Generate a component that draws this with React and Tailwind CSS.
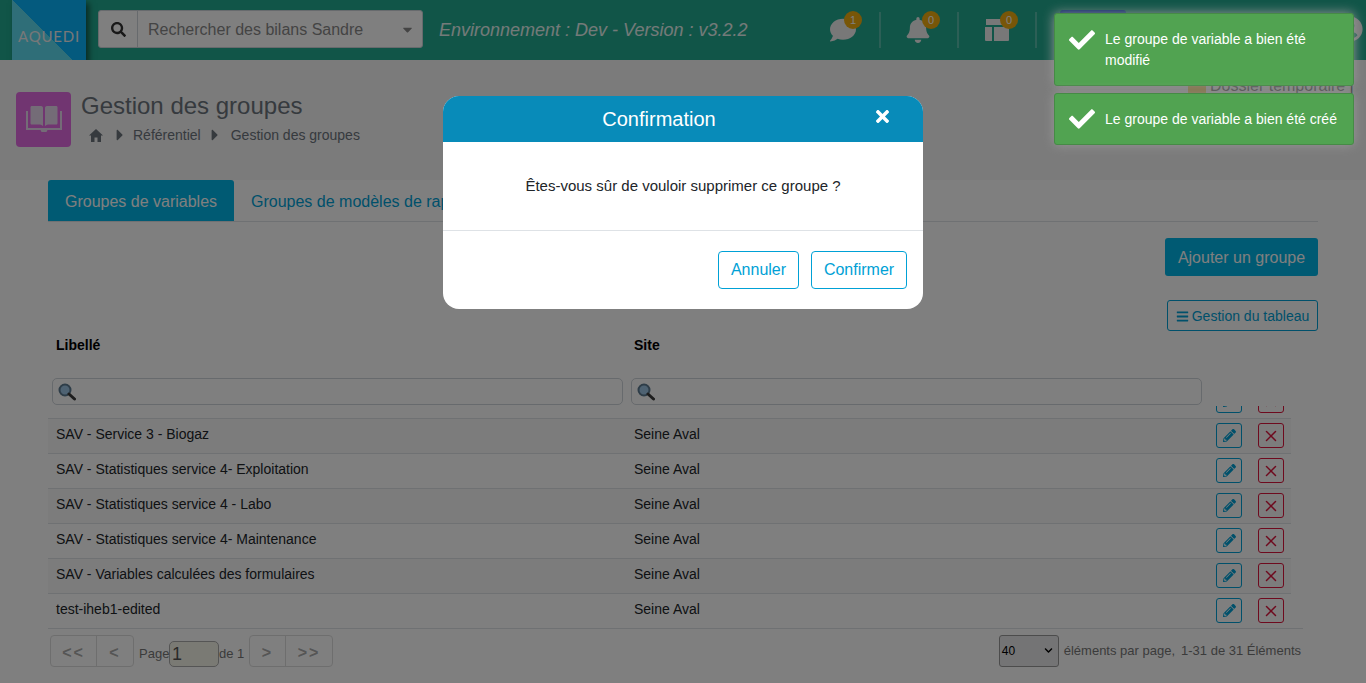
import React from "react";
import { FaSearch, FaComment, FaBell, FaCaretRight, FaCaretDown, FaBars, FaPencilAlt, FaTimes, FaCheck, FaChevronDown, FaUserCircle } from "react-icons/fa";
import { X } from "lucide-react";

const rows = [
  "",
  "SAV - Service 3 - Biogaz",
  "SAV - Statistiques service 4- Exploitation",
  "SAV - Statistiques service 4 - Labo",
  "SAV - Statistiques service 4- Maintenance",
  "SAV - Variables calculées des formulaires",
  "test-iheb1-edited",
];

function Badge({ n }) {
  return (
    <span className="absolute -top-[6px] -right-[8px] w-[18px] h-[18px] rounded-full bg-[#f0ad10] text-white text-[11px] leading-[18px] text-center">
      {n}
    </span>
  );
}

function HeaderIcon({ children, n }) {
  return (
    <div className="relative w-[78px] h-[36px] flex items-center justify-center border-r-2 border-r-[#ffffff40]">
      <div className="relative w-[26px] h-[26px] flex items-center justify-center text-[#f0f0f0]">
        {children}
        <Badge n={n} />
      </div>
    </div>
  );
}

function BookIcon() {
  return (
    <svg width="36" height="27" viewBox="0 0 36 27" fill="#e9d8ee">
      <path d="M6 0h9c1.500 0 2 1 2 2v18c-1-1-2-1.500-3-1.500H6c-1 0-1.500-.5-1.500-1.500V1.500C4.500 .5 5 0 6 0z" />
      <path d="M30 0h-9c-1.500 0-2 1-2 2v18c1-1 2-1.500 3-1.500h8c1 0 1.500-.5 1.500-1.500V1.500C31.500 .5 31 0 30 0z" />
      <path d="M0 5h2v17h32V5h2v19H21.500L20.500 26h-5L14.500 24H0z" />
    </svg>
  );
}

function TableIcon() {
  return (
    <svg width="24" height="22" viewBox="0 0 24 22" fill="currentColor">
      <path d="M1 0h22v6H1z" />
      <path d="M0 8h7v14H1a1 1 0 0 1-1-1z" />
      <path d="M9 8h15v13a1 1 0 0 1-1 1H9z" />
    </svg>
  );
}

function HomeIcon() {
  return (
    <svg width="14" height="13" viewBox="0 0 14 13" fill="currentColor" className="ml-[8px] shrink-0">
      <path d="M7 0L0 6.500h2V13h3.500V8.500h3V13H12V6.500h2z" />
    </svg>
  );
}

function MagnifierIcon() {
  return (
    <svg width="18" height="18" viewBox="0 0 18 18" className="shrink-0">
      <circle cx="7" cy="7" r="5.500" fill="#9cc4e4" stroke="#5d7a90" strokeWidth="2" />
      <path d="M11 11l5.500 5" stroke="#3a3a3a" strokeWidth="3" strokeLinecap="round" />
    </svg>
  );
}

function FilterInput() {
  return (
    <div className="w-[571px] h-[27px] border border-[#ced4da] rounded-[5px] bg-[#ffffff] flex items-center pl-[5px]">
      <MagnifierIcon />
    </div>
  );
}

function Row({ label }) {
  return (
    <div className="h-[35px] last:h-[34px] shrink-0 w-[1243px] flex border-b border-[#dee2e6] last:border-b-0 even:bg-[#f9f9f9] text-[14px] text-[#212529]">
      <div className="w-[579px] pl-[8px] pt-[5px]">{label}</div>
      <div className="w-[581px] pl-[7px] pt-[5px]">{label && "Seine Aval"}</div>
      <div className="pt-[4px] flex gap-[16px] pl-[8px]">
        <button className="w-[26px] h-[25px] border border-[#00a1d6] rounded-[3px] flex items-center justify-center text-[#00a1d6] text-[13px]">
          <FaPencilAlt />
        </button>
        <button className="w-[26px] h-[25px] border border-[#dc143c] rounded-[3px] flex items-center justify-center text-[#dc143c]">
          <X size={18} strokeWidth={2} />
        </button>
      </div>
    </div>
  );
}

function Toast({ children, className }) {
  return (
    <div className={`w-[300px] bg-[#51a351] border border-[#468a46] rounded-[3px] flex text-[14px] leading-[21px] text-white shadow-[0_0_12px_#999] ${className}`}>
      <FaCheck className="ml-[14px] mr-[10px] text-[26px] shrink-0" />
      <div className="pr-[10px]">{children}</div>
    </div>
  );
}

export default function App() {
  return (
    <div className="relative h-[683px] overflow-hidden bg-white font-['Liberation_Sans',Arial,sans-serif] text-[#212529]">
      {/* top bar */}
      <header className="h-[60px] bg-[#22aa90] flex items-start relative">
        <div className="ml-[12px] w-[74px] h-[73px] shrink-0 bg-[linear-gradient(45deg,#5edcf0_50%,#08b4fc_50%)] shadow-[3px_3px_6px_#00000080] flex items-center justify-center text-[#f0f0f0] text-[15px] tracking-[0.8px] font-['Lato',sans-serif] relative">
          AQUEDI
        </div>
        <div className="ml-[12px] mt-[10px] w-[325px] h-[38px] bg-white border border-[#ced4da] rounded-[3px] flex items-center shrink-0">
          <div className="w-[39px] h-full flex items-center justify-center border-r border-[#ced4da] text-[#333] text-[15px]">
            <FaSearch />
          </div>
          <div className="flex-1 pl-[10px] pt-[2px] text-[16px] text-[#888]">Rechercher des bilans Sandre</div>
          <FaCaretDown className="mr-[7px] text-[#888] text-[15px]" />
        </div>
        <div className="ml-[16px] mt-[17px] text-[18px] italic text-[#e8f5f2] whitespace-nowrap">
          Environnement : Dev - Version : v3.2.2
        </div>
        <div className="absolute left-[803px] top-[12px] flex">
          <HeaderIcon n={1}><FaComment size={26} className="relative left-[2px]" /></HeaderIcon>
          <HeaderIcon n={0}><FaBell size={26} className="relative -left-[1px]" /></HeaderIcon>
          <HeaderIcon n={0}><TableIcon /></HeaderIcon>
        </div>
        <div className="absolute left-[1060px] top-[10px] w-[66px] h-[6px] bg-[#0044cc] rounded-t-[3px]" />
        <FaUserCircle className="absolute left-[1337px] top-[16px] text-[#f0f0f0] text-[26px]" />
      </header>

      {/* page title */}
      <section className="h-[120px] bg-[#f6f6f6] flex relative">
        <div className="ml-[16px] mt-[32px] w-[55px] h-[55px] rounded-[4px] bg-[#e26be2] flex items-center justify-center shrink-0">
          <BookIcon />
        </div>
        <div className="ml-[10px] mt-[31px]">
          <div className="text-[24px] leading-[30px] text-[#6c757d]">Gestion des groupes</div>
          <div className="flex items-center mt-[4px] text-[14px] text-[#6c757d] leading-[20px]">
            <HomeIcon />
            <FaCaretRight className="ml-[8px] text-[18px]" />
            <span className="ml-[4px]">Référentiel</span>
            <FaCaretRight className="ml-[5px] text-[18px]" />
            <span className="ml-[7px]">Gestion des groupes</span>
          </div>
        </div>
        <div className="absolute left-[1188px] top-[16px] flex items-center text-[16px] text-[#555] leading-[20px]">
          <span className="w-[18px] h-[14px] bg-[#f0c040] mr-[4px]" />
          Dossier temporaire |
        </div>
      </section>

      {/* content */}
      <main className="pl-[48px] pr-[48px]">
        <nav className="h-[42px] w-[1270px] flex border-b border-[#dee2e6] text-[16px]">
          <div className="h-[41px] w-[186px] bg-[#00b4e6] text-white rounded-t-[3px] flex items-center justify-center shrink-0 pt-[2px]">Groupes de variables</div>
          <div className="pl-[17px] pt-[10px] text-[#00a1d6] whitespace-nowrap">Groupes de modèles de rapport</div>
        </nav>
        <div className="w-[1270px] flex flex-col items-end">
          <button className="mt-[16px] w-[153px] h-[38px] pt-[1px] bg-[#00b4e6] text-white rounded-[3px] text-[16px]">Ajouter un groupe</button>
          <button className="mt-[24px] w-[151px] h-[31px] pt-[1px] border border-[#00a1d6] rounded-[3px] text-[#00a1d6] text-[14px] flex items-center justify-center gap-[3px]">
            <FaBars className="text-[13px]" /> Gestion du tableau
          </button>
        </div>
        <div className="w-[1255px] flex mt-[5px] h-[18px] text-[14px] font-bold text-black leading-[18px]">
          <div className="w-[579px] pl-[8px]">Libellé</div>
          <div className="pl-[7px]">Site</div>
        </div>
        <div className="flex gap-[8px] pl-[4px] mt-[24px]">
          <FilterInput />
          <FilterInput />
        </div>
        <div className="mt-[1px] h-[223px] w-[1255px] overflow-hidden flex flex-col justify-end border-b border-[#dee2e6]">
          {rows.map((label, i) => (
            <Row key={i} label={label} />
          ))}
        </div>
        <div className="w-[1255px] flex justify-between pt-[6px] text-[13px]">
          <div className="flex items-end pl-[2px] text-[#777]">
            <div className="h-[32px] flex border border-[#ddd] rounded-[4px] text-[#aaa] text-[16px] font-bold tracking-[2px]">
              <span className="w-[46px] border-r border-[#ddd] flex items-center justify-center pt-[4px]">&lt;&lt;</span>
              <span className="w-[36px] flex items-center justify-center pt-[4px]">&lt;</span>
            </div>
            <span className="ml-[5px] mb-[4px] w-[30px]">Page</span>
            <input readOnly value="1" className="w-[50px] h-[26px] border border-[#aaa] rounded-[5px] bg-[#f5f5e8] text-[18px] text-[#555] pl-[2px]" />
            <span className="mb-[4px] w-[30px]">de 1</span>
            <div className="h-[32px] flex border border-[#ddd] rounded-[4px] text-[#aaa] text-[16px] font-bold tracking-[2px]">
              <span className="w-[36px] border-r border-[#ddd] flex items-center justify-center pt-[4px]">&gt;</span>
              <span className="w-[46px] flex items-center justify-center pt-[4px]">&gt;&gt;</span>
            </div>
          </div>
          <div className="flex items-center pr-[2px] text-[#777]">
            <div className="w-[60px] h-[32px] border border-[#999] rounded-[3px] bg-[#e8e8ea] text-[12px] text-black flex items-center justify-between pl-[2px] pr-[3px] pb-[1px]">
              40 <FaChevronDown className="text-[9px] mr-[2px]" />
            </div>
            <span className="ml-[5px] pb-[1px]">éléments par page,</span>
            <span className="ml-[6px] pb-[1px]">1-31 de 31 Éléments</span>
          </div>
        </div>
      </main>

      {/* backdrop */}
      <div className="absolute inset-0 bg-black/50 z-20" />

      {/* modal */}
      <div className="absolute left-[443px] top-[96px] z-30 w-[480px] h-[213px] bg-white rounded-[16px] overflow-hidden flex flex-col">
        <div className="h-[46px] bg-[#088bb9] text-white flex shrink-0">
          <div className="flex-1 text-center text-[20px] leading-[46px]">Confirmation</div>
          <div className="w-[48px] pt-[11px] text-[19px]"><FaTimes className="relative -left-[2px]" /></div>
        </div>
        <div className="h-[89px] border-b border-[#dee2e6] flex items-center justify-center text-[15px] text-[#212529] pt-[1px]">
          Êtes-vous sûr de vouloir supprimer ce groupe ?
        </div>
        <div className="flex justify-end gap-[12px] pt-[20px] pr-[16px]">
          <button className="w-[81px] h-[38px] border border-[#00a1d6] rounded-[4px] text-[#00a1d6] text-[16px]">Annuler</button>
          <button className="w-[96px] h-[38px] border border-[#00a1d6] rounded-[4px] text-[#00a1d6] text-[16px]">Confirmer</button>
        </div>
      </div>

      {/* toasts */}
      <div className="absolute left-[1054px] top-[13px] z-30 flex flex-col gap-[7px]">
        <Toast className="h-[73px] items-start pt-[13px]">
          <div className="pt-[2px]">Le groupe de variable a bien été modifié</div>
        </Toast>
        <Toast className="h-[52px] items-center">Le groupe de variable a bien été créé</Toast>
      </div>
    </div>
  );
}
